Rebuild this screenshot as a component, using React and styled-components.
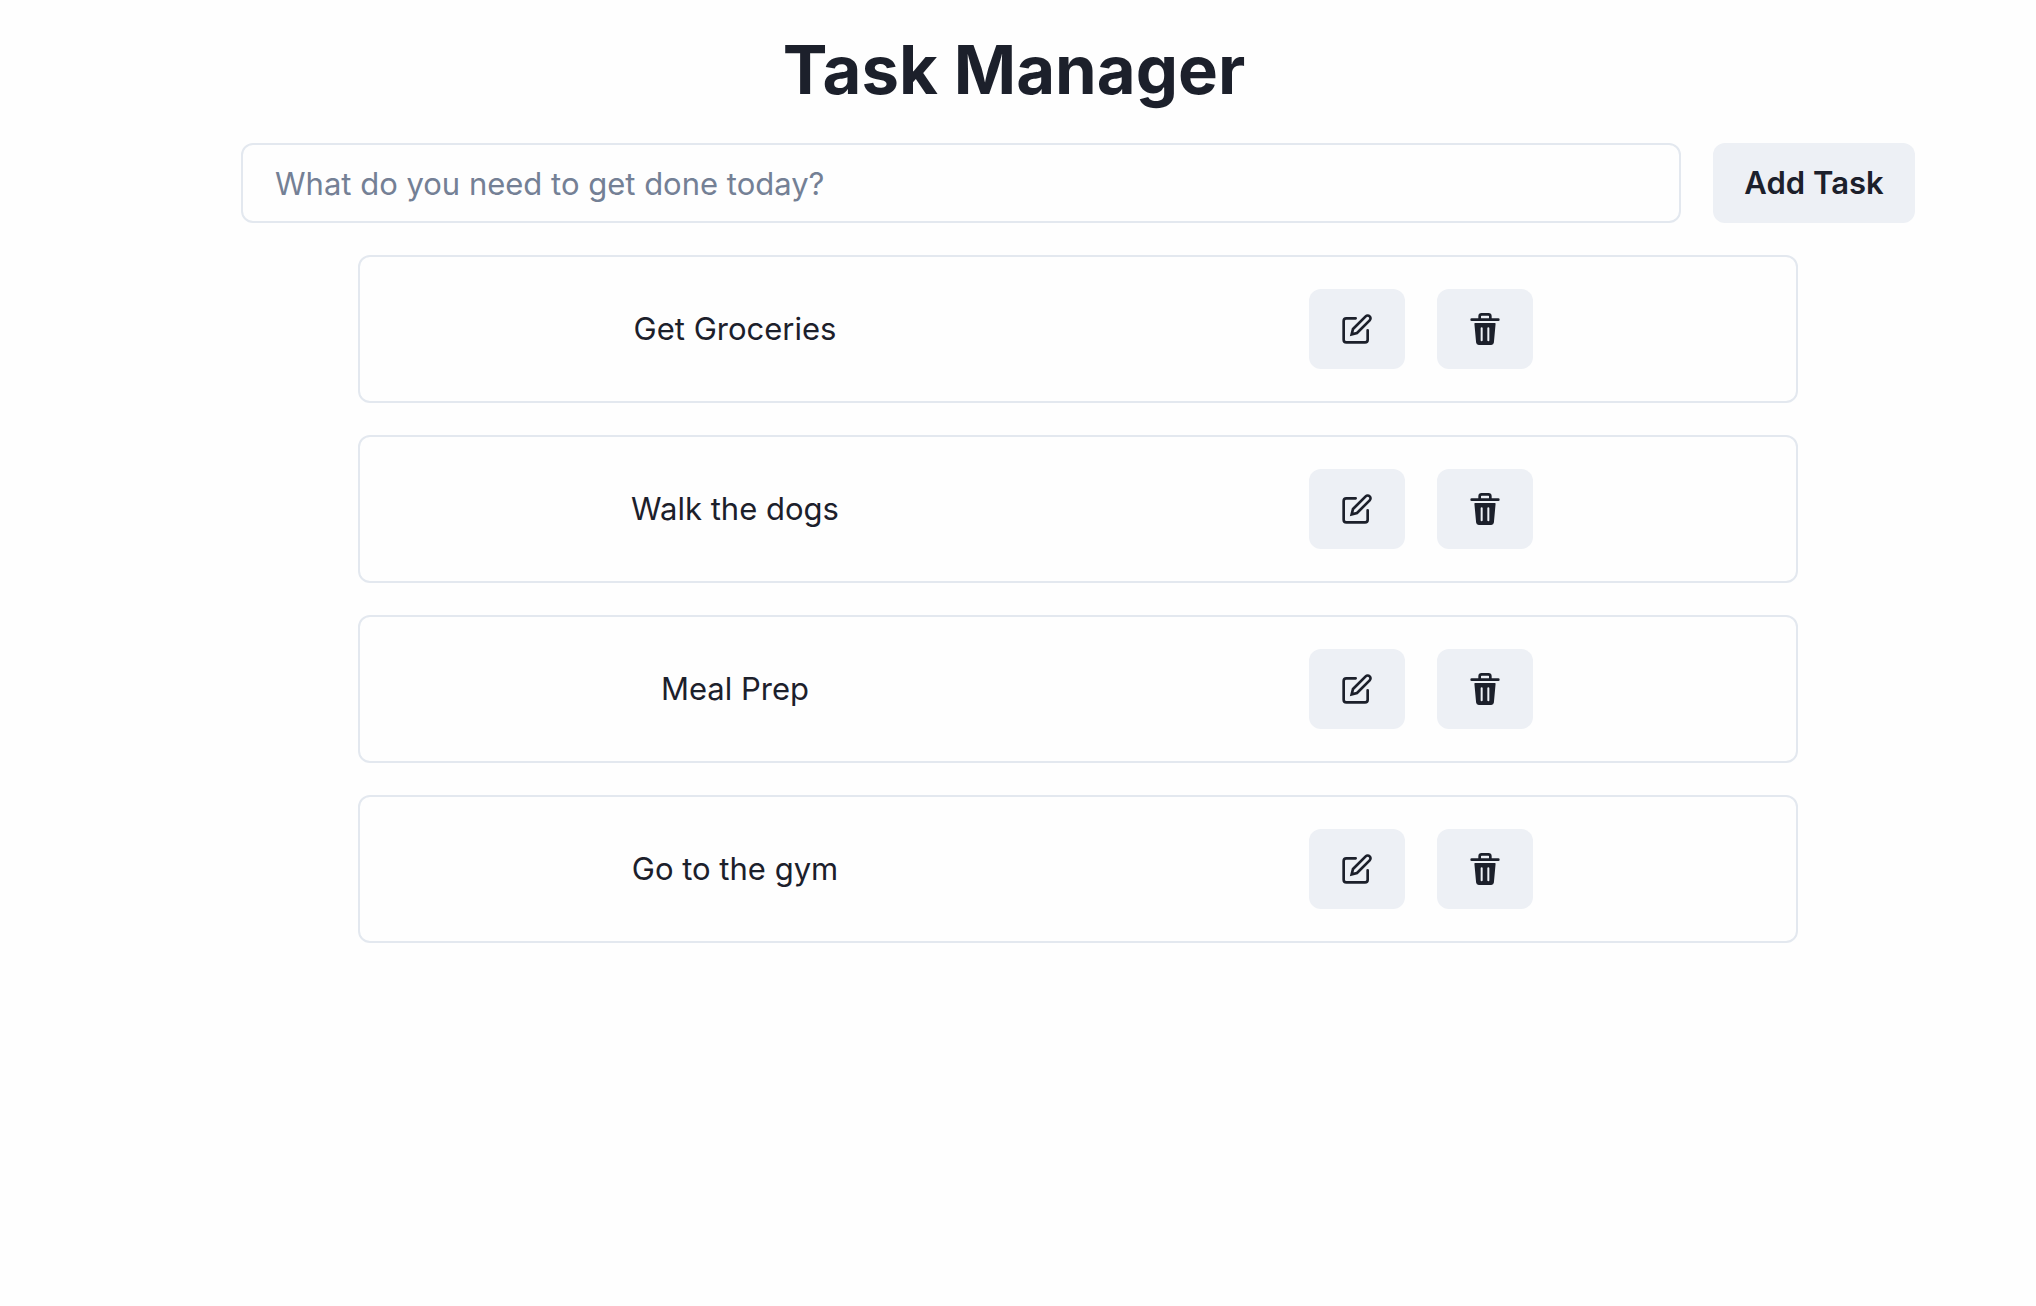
import React, { useState } from "react";
import styled, { createGlobalStyle } from "styled-components";

const GlobalStyle = createGlobalStyle`
  *, *::before, *::after { box-sizing: border-box; }
  body {
    margin: 0;
    background: #fefefe;
    color: #1c202b;
    font-family: Inter, "Liberation Sans", sans-serif;
    font-size: 31px;
    line-height: 48px;
  }
`;

const Page = styled.div`
  padding: 32px 0;
`;

const Title = styled.h1`
  margin: 0 0 36px;
  padding-right: 8px;
  font-size: 67px;
  font-weight: 700;
  line-height: 75px;
  text-align: center;
`;

const Main = styled.main`
  display: flex;
  flex-direction: column;
  align-items: center;
  gap: 32px;
  padding-left: 120px;
`;

const TaskForm = styled.form`
  display: flex;
  justify-content: center;
  gap: 32px;
  width: 100%;
`;

const TaskInput = styled.input`
  flex: 0 1 1440px;
  min-width: 0;
  height: 80px;
  padding: 0 32px;
  border: 2px solid #e3e8ef;
  border-radius: 12px;
  background: transparent;
  color: inherit;
  font: inherit;

  &::placeholder {
    color: #748095;
    opacity: 1;
  }
`;

const Button = styled.button`
  display: inline-flex;
  flex: none;
  align-items: center;
  justify-content: center;
  min-width: ${({ $wide }) => ($wide ? "202px" : "96px")};
  height: 80px;
  padding: 0;
  border: 0;
  border-radius: 12px;
  background: #edf0f5;
  color: inherit;
  font: inherit;
  font-weight: 600;
  cursor: pointer;
`;

const TaskList = styled.ul`
  display: flex;
  flex-direction: column;
  gap: 32px;
  width: 100%;
  max-width: 1440px;
  margin: 0;
  padding: 0;
  list-style: none;
`;

const TaskCard = styled.li`
  display: grid;
  grid-template-columns: 1fr 1fr;
  align-items: center;
  padding: 32px;
  border: 2px solid #e3e8ef;
  border-radius: 12px;
`;

const TaskName = styled.span`
  text-align: center;
`;

const Actions = styled.div`
  display: flex;
  justify-content: center;
  gap: 32px;
`;

const Icon = styled.svg.attrs({ viewBox: "0 0 24 24", "aria-hidden": true })`
  width: 32px;
  height: 32px;
`;

const EditIcon = () => (
  <Icon>
    <g fill="none" stroke="currentColor" strokeLinecap="round" strokeWidth="2">
      <path d="M11 4H4a2 2 0 0 0-2 2v14a2 2 0 0 0 2 2h14a2 2 0 0 0 2-2v-7" />
      <path d="M18.5 2.5a2.121 2.121 0 0 1 3 3L12 15l-4 1 1-4 9.5-9.5z" />
    </g>
  </Icon>
);

const DeleteIcon = () => (
  <Icon>
    <path
      fill="currentColor"
      d="M19.452 7.5H4.547a.5.5 0 00-.5.545l1.287 14.136A2 2 0 007.326 24h9.347a2 2 0 001.992-1.819L19.95 8.045a.5.5 0 00-.129-.382.5.5 0 00-.369-.163zm-9.2 13a.75.75 0 01-1.5 0v-9a.75.75 0 011.5 0zm5 0a.75.75 0 01-1.5 0v-9a.75.75 0 011.5 0zM22 4h-4.75a.25.25 0 01-.25-.25V2.5A2.5 2.5 0 0014.5 0h-5A2.5 2.5 0 007 2.5v1.25a.25.25 0 01-.25.25H2a1 1 0 000 2h20a1 1 0 000-2zM9 3.75V2.5a.5.5 0 01.5-.5h5a.5.5 0 01.5.5v1.25a.25.25 0 01-.25.25h-5.5A.25.25 0 019 3.75z"
    />
  </Icon>
);

const initialTasks = ["Get Groceries", "Walk the dogs", "Meal Prep", "Go to the gym"].map(
  (name, id) => ({ id, name })
);

export default function App() {
  const [tasks, setTasks] = useState(initialTasks);
  const [draft, setDraft] = useState("");

  const addTask = (event) => {
    event.preventDefault();
    const name = draft.trim();
    if (!name) return;
    setTasks([...tasks, { id: Date.now(), name }]);
    setDraft("");
  };

  const removeTask = (id) => setTasks(tasks.filter((task) => task.id !== id));

  const editTask = (task) => {
    setDraft(task.name);
    removeTask(task.id);
  };

  return (
    <Page>
      <GlobalStyle />
      <Title>Task Manager</Title>
      <Main>
        <TaskForm onSubmit={addTask}>
          <TaskInput
            type="text"
            aria-label="New task"
            placeholder="What do you need to get done today?"
            value={draft}
            onChange={(event) => setDraft(event.target.value)}
          />
          <Button type="submit" $wide>
            Add Task
          </Button>
        </TaskForm>
        <TaskList>
          {tasks.map((task) => (
            <TaskCard key={task.id}>
              <TaskName>{task.name}</TaskName>
              <Actions>
                <Button type="button" aria-label={`Edit ${task.name}`} onClick={() => editTask(task)}>
                  <EditIcon />
                </Button>
                <Button type="button" aria-label={`Delete ${task.name}`} onClick={() => removeTask(task.id)}>
                  <DeleteIcon />
                </Button>
              </Actions>
            </TaskCard>
          ))}
        </TaskList>
      </Main>
    </Page>
  );
}
